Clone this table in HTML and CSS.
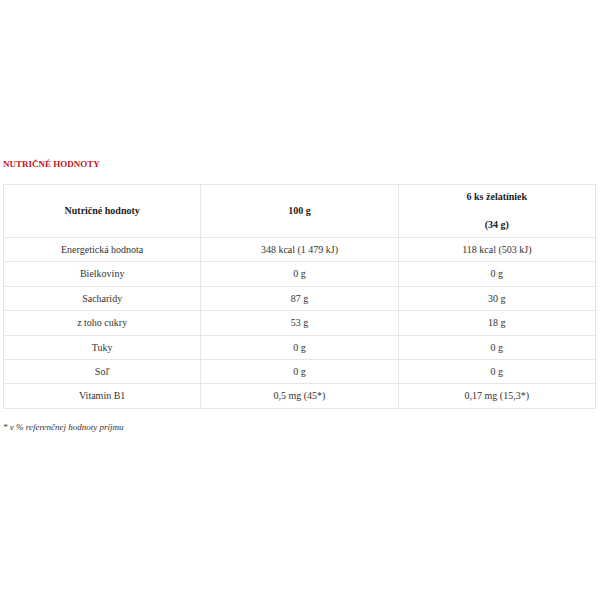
FILE: index.html
```html
<!DOCTYPE html>
<html lang="sk">
<head>
<meta charset="utf-8">
<title>Nutričné hodnoty</title>
<link rel="stylesheet" href="styles.css">
</head>
<body>
<div class="page">
  <h3 class="title">NUTRIČNÉ HODNOTY</h3>
  <table class="nutri">
    <thead>
      <tr>
        <th><p>Nutričné hodnoty</p></th>
        <th><p>100 g</p></th>
        <th><p>6 ks želatíniek</p><p class="gap">(34 g)</p></th>
      </tr>
    </thead>
    <tbody>
      <tr><td>Energetická hodnota</td><td>348 kcal (1 479 kJ)</td><td>118 kcal (503 kJ)</td></tr>
      <tr><td>Bielkoviny</td><td>0 g</td><td>0 g</td></tr>
      <tr><td>Sacharidy</td><td>87 g</td><td>30 g</td></tr>
      <tr><td>z toho cukry</td><td>53 g</td><td>18 g</td></tr>
      <tr><td>Tuky</td><td>0 g</td><td>0 g</td></tr>
      <tr><td>Soľ</td><td>0 g</td><td>0 g</td></tr>
      <tr><td>Vitamin B1</td><td>0,5 mg (45*)</td><td>0,17 mg (15,3*)</td></tr>
    </tbody>
  </table>
  <p class="note">* v % referenčnej hodnoty príjmu</p>
</div>
</body>
</html>
```
FILE: styles.css
```css
html, body {
  margin: 0;
  padding: 0;
  background: #fff;
}
body {
  font-family: "Liberation Serif", "DejaVu Serif", serif;
  color: #333;
  font-size: 10px;
}
.page {
  padding: 159px 5px 0 3px;
}
.title {
  margin: 0 0 14px 0;
  font-size: 9px;
  line-height: 11px;
  font-weight: bold;
  color: #c4161c;
}
.nutri {
  width: 593px;
  border-collapse: collapse;
  table-layout: fixed;
}
.nutri th,
.nutri td {
  border: 1px solid #e6e6e6;
  text-align: center;
  vertical-align: middle;
  padding: 6px 4px;
  line-height: 11.4px;
  font-size: 10px;
}
.nutri th {
  font-weight: bold;
  color: #222;
  line-height: 12px;
}
.nutri th p {
  margin: 0;
}
.nutri th p.gap {
  margin-top: 16px;
}
.note {
  margin: 13px 0 0 0;
  font-style: italic;
  font-size: 9px;
  line-height: 11px;
  color: #333;
}
```
